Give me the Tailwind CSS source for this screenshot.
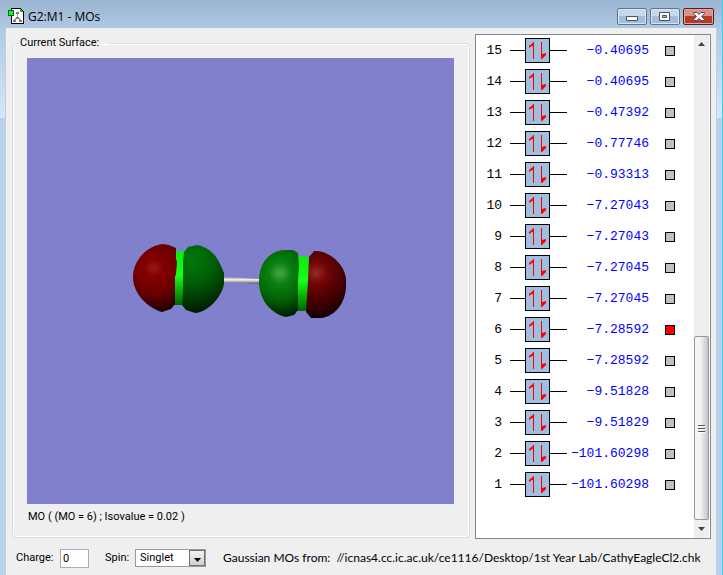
<!DOCTYPE html>
<html lang="en">

<head>
  <meta charset="UTF-8">
  <meta name="viewport" content="width=device-width, initial-scale=1.0">
  <title>G2:M1 - MOs</title>
  <script src="https://cdn.jsdelivr.net/npm/@tailwindcss/browser@4"></script>
</head>

<body class="font-[Roboto,sans-serif] text-[11px] text-black">
  <div
    class="flex min-h-screen flex-col border-r border-[#35d0ee] bg-[linear-gradient(#99b4d1,#b0c9e3_28px,#d9e7f5_118px,#b9d1ea_118px)] px-[5px]">

    <!-- title bar -->
    <header class="flex h-7 items-start px-[3px]">
      <svg class="mt-2 h-4 w-4 shrink-0" viewBox="0 0 16 16" shape-rendering="crispEdges">
        <path d="M3.500 .5H12.500L15.500 3.500V15.500H3.500Z" fill="#fff" stroke="#000" />
        <path d="M12 1h1v1h1v1h1v1h-3z" fill="#0c0" />
        <path d="M9.500 5v5M9 10l-3 2M10 10l3 2" fill="none" stroke="#999" />
        <path d="M8 4h3v2H8zM8 9h3v2H8zM5 12h3v2H5zM11 12h3v2h-3z" fill="#808080" />
        <rect x=".5" y="2.500" width="5" height="5" fill="#0f0" stroke="#063" />
      </svg>
      <h1 class="mt-[9px] ml-1 flex-1 font-['Open_Sans',sans-serif] text-[12px] leading-4">G2:M1 - MOs</h1>
      <div class="mt-2 flex gap-[3px]">
        <button type="button" aria-label="Minimize"
          class="flex h-[17px] w-[30px] items-center justify-center rounded-xs border border-[#5c7590] bg-linear-to-b from-[#c6d8eb] from-50% to-[#a3bedb] to-50% shadow-[inset_0_0_0_1px_#d8e6f4]">
          <svg class="h-[11px] w-3" viewBox="0 0 12 11">
            <path d="M.5 5.500h11v4h-11z" fill="#fff" stroke="#45505f" />
          </svg>
        </button>
        <button type="button" aria-label="Maximize"
          class="flex h-[17px] w-[30px] items-center justify-center rounded-xs border border-[#5c7590] bg-linear-to-b from-[#c6d8eb] from-50% to-[#a3bedb] to-50% shadow-[inset_0_0_0_1px_#d8e6f4]">
          <svg class="h-[11px] w-3" viewBox="0 0 12 11">
            <path d="M.5 1.500h10v8h-10zM3.500 4.500v2h4v-2z" fill="#fff" fill-rule="evenodd" stroke="#45505f" />
          </svg>
        </button>
        <button type="button" aria-label="Close"
          class="flex h-[17px] w-[31px] items-center justify-center rounded-xs border border-[#5a1a2a] bg-linear-to-b from-[#d79289] from-50% to-[#b83a26] to-50% shadow-[inset_0_0_0_1px_#e0a59c]">
          <svg class="h-[11px] w-3" viewBox="0 0 12 11">
            <path d="M.5 1.500h3.500L6 3.500l2-2h3.500v1L8.500 5.500l3 3v1H8L6 7.500l-2 2H.5v-1l3-3-3-3z" fill="#fff" stroke="#4a4653" />
          </svg>
        </button>
      </div>
    </header>

    <div class="flex flex-1 flex-col border-x border-[#b9d1ea] bg-[#efefef]">
      <main class="flex flex-1 gap-[5px] px-[6px] pr-[5px] pt-1.5">

        <!-- surface preview -->
        <fieldset class="mt-0.5 mb-px flex min-w-0 flex-1 flex-col rounded-sm border border-[#d3dde6] pr-[15px] pb-[13px] pl-3.5 shadow-[inset_1px_1px_0_#fff,inset_-1px_-1px_0_#fff]">
          <legend class="-ml-2 pr-2.5 pl-px leading-[14px]">Current Surface:</legend>
          <div class="mt-2 flex flex-1 items-center justify-center bg-[#8080cc]">
            <svg class="mr-px h-[74px] w-[214px]" viewBox="133 244 214 74" role="img" aria-label="Molecular orbital 6">
              <defs>
                <radialGradient id="redLeft" gradientUnits="userSpaceOnUse" cx="154" cy="268" r="46">
                  <stop offset="0" stop-color="#941a1a" />
                  <stop offset=".2" stop-color="#850000" />
                  <stop offset=".55" stop-color="#6a0000" />
                  <stop offset="1" stop-color="#1a0000" />
                </radialGradient>
                <radialGradient id="greenLeft" gradientUnits="userSpaceOnUse" cx="192" cy="260" r="54">
                  <stop offset="0" stop-color="#00780a" />
                  <stop offset=".4" stop-color="#006006" />
                  <stop offset="1" stop-color="#001800" />
                </radialGradient>
                <radialGradient id="greenRight" gradientUnits="userSpaceOnUse" cx="280" cy="273" r="44">
                  <stop offset="0" stop-color="#48a848" />
                  <stop offset=".25" stop-color="#0a8010" />
                  <stop offset=".6" stop-color="#006404" />
                  <stop offset="1" stop-color="#001c00" />
                </radialGradient>
                <radialGradient id="redRight" gradientUnits="userSpaceOnUse" cx="316" cy="273" r="44">
                  <stop offset="0" stop-color="#942a2a" />
                  <stop offset=".25" stop-color="#720505" />
                  <stop offset=".6" stop-color="#4a0000" />
                  <stop offset="1" stop-color="#180000" />
                </radialGradient>
                <linearGradient id="ring" x1="0" y1="0" x2="0" y2="1">
                  <stop offset="0" stop-color="#10e810" />
                  <stop offset=".45" stop-color="#1aff1a" />
                  <stop offset=".75" stop-color="#08a808" />
                  <stop offset="1" stop-color="#006400" />
                </linearGradient>
                <linearGradient id="bond" x1="0" y1="0" x2="0" y2="1">
                  <stop offset="0" stop-color="#999" />
                  <stop offset=".4" stop-color="#f4f4f4" />
                  <stop offset="1" stop-color="#555" />
                </linearGradient>
              </defs>
              <path d="M222 277l39 2v5l-39-2z" fill="url(#bond)" />
              <path d="M174 251h10v54h-10z" fill="url(#ring)" />
              <path d="M133 277C133 260 148 245 163 244L169 245 176 248V259L177 262 176 274 175 277V304L171 309 162 312C148 308 133 294 133 277Z"
                fill="url(#redLeft)" />
              <path d="M184 252L188 247 197 245C208 247 216 254 221 266L224 273V284C222 296 209 312 195 313L186 310 182 305 183 290V262Z"
                fill="url(#greenLeft)" />
              <path d="M297 257L302 256 309 257V310L304 311H297Z" fill="url(#ring)" />
              <path d="M259 281C259 262 270 251 284 250H293L298 253 299 266 298 280V310L294 315 286 317C272 314 259 301 259 281Z"
                fill="url(#greenRight)" />
              <path d="M309 257L314 251C330 250 346 266 346 280V287C345 305 334 316 322 318H311L306 312 307 296 308 280Z"
                fill="url(#redRight)" />
            </svg>
          </div>
          <p class="mt-1.5 ml-px leading-[14px]">MO ( (MO = 6) ; Isovalue = 0.02 )</p>
        </fieldset>

        <!-- orbital energies -->
        <section class="flex w-[236px] shrink-0 border border-[#828790] bg-white pr-px font-['Liberation_Mono',monospace] text-[13px]">
          <ol id="orbitals" class="flex-1 pb-[37px]"></ol>
          <div class="flex w-[15px] flex-col items-center bg-[#eee]">
            <button type="button" aria-label="Scroll up" class="flex h-[17px] w-full items-center justify-center">
              <svg class="h-1 w-[7px]" viewBox="0 0 7 4">
                <path d="M0 4L3.500 0 7 4z" fill="#444" />
              </svg>
            </button>
            <div class="flex-1"></div>
            <div
              class="flex h-[184px] w-full flex-col items-center justify-center gap-0.5 rounded-xs border border-[#979797] bg-linear-to-r from-[#f4f4f4] from-40% to-[#c4c4c8]">
              <i class="h-px w-[7px] bg-[#555] shadow-[0_1px_0_#fff]"></i>
              <i class="h-px w-[7px] bg-[#555] shadow-[0_1px_0_#fff]"></i>
              <i class="h-px w-[7px] bg-[#555] shadow-[0_1px_0_#fff]"></i>
            </div>
            <button type="button" aria-label="Scroll down" class="flex h-[18px] w-full items-center justify-center">
              <svg class="h-1 w-[7px]" viewBox="0 0 7 4">
                <path d="M0 0h7L3.500 4z" fill="#444" />
              </svg>
            </button>
          </div>
        </section>
      </main>

      <footer class="flex h-9 items-center pt-0.5 pl-2.5">
        <label for="charge" class="w-[38px]">Charge:</label>
        <input id="charge" type="text" value="0" class="ml-1.5 h-[19px] w-[29px] border border-[#abadb3] bg-white px-0.5">
        <label for="spin" class="ml-4 w-6">Spin:</label>
        <div class="relative ml-1.5 flex">
          <select id="spin" class="h-[18px] w-[71px] appearance-none border border-[#9a9a9a] bg-white pl-1 leading-3">
            <option>Singlet</option>
            <option>Triplet</option>
          </select>
          <span
            class="pointer-events-none absolute top-px right-px flex h-4 w-4 items-center justify-center border border-[#707070] bg-linear-to-b from-[#f2f2f2] to-[#cfcfcf]">
            <svg class="mt-1 h-1 w-[7px]" viewBox="0 0 7 4">
              <path d="M0 0h7L3.500 4z" fill="#000" />
            </svg>
          </span>
        </div>
        <p class="ml-[17px] font-[Lato,sans-serif] text-[12px] whitespace-pre">Gaussian MOs from:  //icnas4.cc.ic.ac.uk/ce1116/Desktop/1st Year Lab/CathyEagleCl2.chk</p>
      </footer>
    </div>
  </div>

  <script>
    const selected = 6

    // energies in hartree, highest orbital first
    const energies = [
      '−0.40695', '−0.40695', '−0.47392', '−0.77746', '−0.93313',
      '−7.27043', '−7.27043', '−7.27045', '−7.27045', '−7.28592',
      '−7.28592', '−9.51828', '−9.51829', '−101.60298', '−101.60298'
    ]

    const list = document.querySelector('#orbitals')
    energies.forEach((energy, index) => {
      const number = energies.length - index
      const row = document.createElement('li')
      row.setAttribute('class', 'flex h-[31px] items-center')
      row.innerHTML = `
        <span class="w-[26px] text-right">${number}</span>
        <span class="ml-2 h-px w-[15px] bg-black"></span>
        <svg class="h-[25px] w-[25px] shrink-0 border border-black bg-[#a0bfdf]" viewBox="0 0 23 23">
          <path d="M7 3h1v17H7zM15 3h1v17h-1z" fill="#f00" />
          <path d="M8 3v4H6L3 9V7zM15 20v-6h1v1l4-1v2l-4 4z" fill="#f00" />
        </svg>
        <span class="h-px w-[17px] bg-black"></span>
        <span class="-ml-1 w-[86px] text-right text-[#00f]">${energy}</span>
        <button type="button" aria-label="Show orbital ${number}" class="ml-4 h-2.5 w-2.5 border border-black ${number === selected ? 'bg-[#f00]' : 'bg-[#c0c0c0]'}"></button>
      `
      list.appendChild(row)
    })
  </script>
</body>

</html>
